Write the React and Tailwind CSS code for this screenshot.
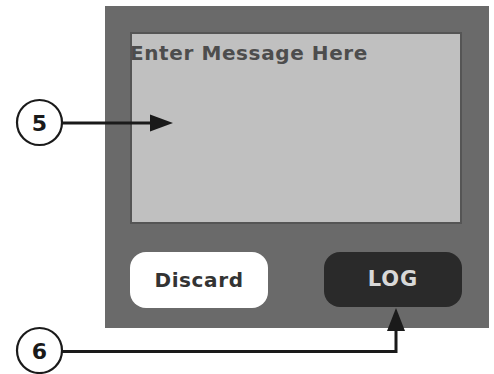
import React from 'react';

// Callout overlay: numbered circles with arrows pointing into the panel
const Callouts = () => (
  <svg className="absolute left-0 top-0 pointer-events-none" width="494" height="374" viewBox="0 0 494 374">
    {/* 5 */}
    <circle cx="39.5" cy="122.5" r="22.5" fill="white" stroke="#1a1a1a" strokeWidth="2.2" />
    <text x="39.5" y="130.5" textAnchor="middle" fontFamily="'DejaVu Sans', sans-serif" fontWeight="bold" fontSize="22" fill="#1a1a1a">5</text>
    <line x1="62" y1="123" x2="152" y2="123" stroke="#1a1a1a" strokeWidth="3" />
    <polygon points="150,114.5 173,123 150,131.5" fill="#1a1a1a" />

    {/* 6 */}
    <circle cx="39.5" cy="350.5" r="22.5" fill="white" stroke="#1a1a1a" strokeWidth="2.2" />
    <text x="39.5" y="358.5" textAnchor="middle" fontFamily="'DejaVu Sans', sans-serif" fontWeight="bold" fontSize="22" fill="#1a1a1a">6</text>
    <polyline points="62,351.5 396,351.5 396,329" fill="none" stroke="#1a1a1a" strokeWidth="3" />
    <polygon points="387,331 396,308 405,331" fill="#1a1a1a" />
  </svg>
);

export default function App() {
  return (
    <div className="relative w-[494px] h-[374px] bg-white overflow-hidden" style={{ fontFamily: "'DejaVu Sans', sans-serif" }}>
      <div className="pt-[6px] pl-[105px]">
        <div className="w-[384px] h-[322px] bg-[#6a6a6a] pt-[26px] pl-[25px] pr-[27px] pb-[20px] flex flex-col">
          <div className="h-[192px] bg-[#c0c0c0] border-2 border-[#555555] pt-[7px]">
            <span className="block -ml-[2px] text-[20px] font-bold text-[#4d4d4d] leading-[24px] tracking-[0.6px]">
              Enter Message Here
            </span>
          </div>
          <div className="mt-[28px] flex justify-between">
            <button className="w-[138px] h-[56px] bg-white rounded-[16px] text-[20px] font-bold text-[#333333] tracking-[0.6px]">
              Discard
            </button>
            <button className="w-[138px] h-[55px] bg-[#2a2a2a] rounded-[16px] text-[21px] font-bold text-[#d8d8d8] tracking-[1px]">
              LOG
            </button>
          </div>
        </div>
      </div>
      <Callouts />
    </div>
  );
}
